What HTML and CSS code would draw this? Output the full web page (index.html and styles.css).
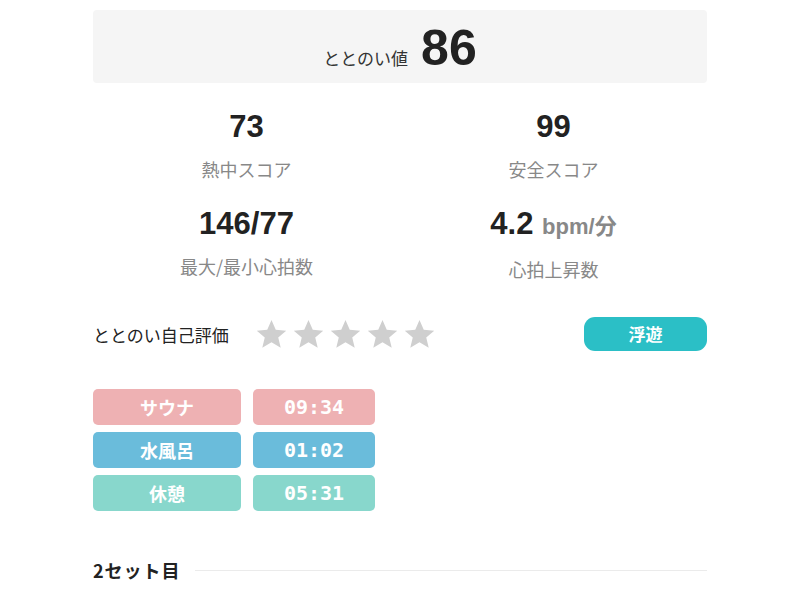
FILE: index.html
```html
<!DOCTYPE html>
<html lang="ja">
  <head>
    <meta charset="UTF-8" />
    <meta name="viewport" content="width=device-width, initial-scale=1.0" />
    <title>ととのい記録</title>
    <link rel="stylesheet" href="styles.css">
  </head>
  <body>
    <main class="page">
      <!-- ととのい値 -->
      <section class="total">
        <span class="total-label">ととのい値</span>
        <span class="total-value">86</span>
      </section>

      <!-- スコア -->
      <section class="stats">
        <div class="stat">
          <div class="stat-value">73</div>
          <div class="stat-label">熱中スコア</div>
        </div>
        <div class="stat">
          <div class="stat-value">99</div>
          <div class="stat-label">安全スコア</div>
        </div>
        <div class="stat">
          <div class="stat-value">146/77</div>
          <div class="stat-label">最大/最小心拍数</div>
        </div>
        <div class="stat">
          <div class="stat-value">4.2 <span class="unit">bpm/分</span></div>
          <div class="stat-label">心拍上昇数</div>
        </div>
      </section>

      <!-- 自己評価 -->
      <section class="rating">
        <span class="rating-label">ととのい自己評価</span>
        <div class="stars">
          <svg class="star" viewBox="0 0 24 24"><path d="M12 1.5l3.1 7.1 7.6.6-5.8 5 1.8 7.5L12 17.7l-6.7 4 1.8-7.5-5.8-5 7.6-.6z"/></svg>
          <svg class="star" viewBox="0 0 24 24"><path d="M12 1.5l3.1 7.1 7.6.6-5.8 5 1.8 7.5L12 17.7l-6.7 4 1.8-7.5-5.8-5 7.6-.6z"/></svg>
          <svg class="star" viewBox="0 0 24 24"><path d="M12 1.5l3.1 7.1 7.6.6-5.8 5 1.8 7.5L12 17.7l-6.7 4 1.8-7.5-5.8-5 7.6-.6z"/></svg>
          <svg class="star" viewBox="0 0 24 24"><path d="M12 1.5l3.1 7.1 7.6.6-5.8 5 1.8 7.5L12 17.7l-6.7 4 1.8-7.5-5.8-5 7.6-.6z"/></svg>
          <svg class="star" viewBox="0 0 24 24"><path d="M12 1.5l3.1 7.1 7.6.6-5.8 5 1.8 7.5L12 17.7l-6.7 4 1.8-7.5-5.8-5 7.6-.6z"/></svg>
        </div>
        <span class="feeling">浮遊</span>
      </section>

      <!-- セット内容 -->
      <section class="steps">
        <div class="step sauna">サウナ</div>
        <div class="step time sauna">09:34</div>
        <div class="step water">水風呂</div>
        <div class="step time water">01:02</div>
        <div class="step rest">休憩</div>
        <div class="step time rest">05:31</div>
      </section>

      <h2 class="set-title">2セット目</h2>
    </main>
  </body>
</html>
```

FILE: styles.css
```css
body {
  margin: 0;
  background: #fff;
  color: #222;
  font-family: "Liberation Sans", "Noto Sans CJK JP", sans-serif;
}

.page {
  width: 614px;
  margin: 0 auto;
  padding-top: 10px;
}

/* ととのい値 */
.total {
  height: 73px;
  background-color: #f5f5f5;
  border-radius: 4px;
  display: flex;
  justify-content: center;
  align-items: baseline;
  gap: 13px;
  line-height: 76px;
}

.total-label {
  font-size: 17px;
  font-family: "Noto Sans CJK JP", sans-serif;
  color: #333;
}

.total-value {
  font-size: 50px;
  font-weight: bold;
  color: #222;
}

/* スコア */
.stats {
  display: grid;
  grid-template-columns: 1fr 1fr;
  row-gap: 25px;
  padding-top: 27px;
  text-align: center;
}

.stat-value {
  font-size: 31px;
  font-weight: bold;
  line-height: 34px;
  color: #222;
}

.row-two .stat-value {
  margin-top: 2px;
}

.unit {
  font-size: 22px;
  color: #888;
  font-weight: bold;
}

.stat-label {
  margin-top: 12px;
  font-size: 18px;
  line-height: 26px;
  color: #888;
  font-family: "Noto Sans CJK JP", sans-serif;
}

/* 自己評価 */
.rating {
  display: flex;
  align-items: center;
  margin-top: 35px;
  height: 34px;
}

.rating-label {
  font-size: 17px;
  font-family: "Noto Sans CJK JP", sans-serif;
  color: #222;
  width: 162px;
}

.stars {
  display: flex;
  gap: 4px;
}

.star {
  width: 33px;
  height: 33px;
  fill: #cfcfcf;
}

.feeling {
  margin-left: auto;
  width: 123px;
  height: 34px;
  line-height: 34px;
  text-align: center;
  background-color: #2bbfc6;
  border-radius: 11px;
  color: #fff;
  font-size: 17px;
  font-weight: bold;
  font-family: "Noto Sans CJK JP", sans-serif;
}

/* セット内容 */
.steps {
  display: grid;
  grid-template-columns: 148px 122px;
  column-gap: 12px;
  row-gap: 7px;
  margin-top: 38px;
}

.step {
  height: 36px;
  line-height: 36px;
  border-radius: 5px;
  text-align: center;
  color: #fff;
  font-size: 18px;
  font-weight: bold;
  font-family: "Noto Sans CJK JP", sans-serif;
}

.time {
  font-family: "DejaVu Sans Mono", monospace;
  font-size: 20px;
}

.sauna {
  background-color: #eeb1b3;
}

.water {
  background-color: #6abcdb;
}

.rest {
  background-color: #88d7cc;
}

.set-title {
  display: flex;
  align-items: center;
  gap: 14px;
  margin: 46px 0 0;
  font-size: 18px;
  letter-spacing: 1px;
  font-weight: bold;
  font-family: "Noto Sans CJK JP", sans-serif;
  color: #222;
}

.set-title::after {
  content: "";
  flex: 1;
  height: 1px;
  background-color: #ebebeb;
}
```
